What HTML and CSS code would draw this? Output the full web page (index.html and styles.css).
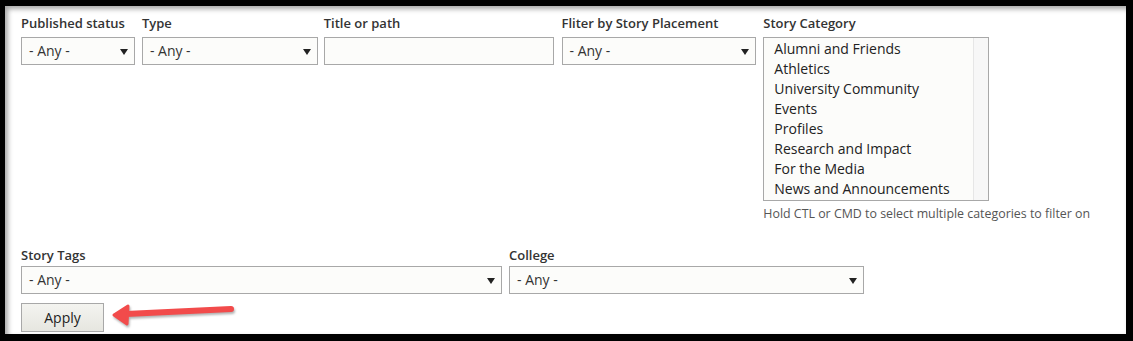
FILE: index.html
```html
<!DOCTYPE html>
<html lang="en">
<head>
  <meta charset="UTF-8" />
  <title>Stories filter</title>
  <link rel="stylesheet" href="styles.css">
</head>
<body>

<div class="frame">
  <div class="panel">
    <form class="filters">
      <div class="row">
        <div class="field w-status">
          <label>Published status</label>
          <div class="select">- Any -</div>
        </div>
        <div class="field w-type">
          <label>Type</label>
          <div class="select">- Any -</div>
        </div>
        <div class="field w-title">
          <label>Title or path</label>
          <div class="text-input"></div>
        </div>
        <div class="field w-placement">
          <label>Fliter by Story Placement</label>
          <div class="select">- Any -</div>
        </div>
        <div class="field w-category">
          <label>Story Category</label>
          <div class="listbox">
            <ul>
              <li>Alumni and Friends</li>
              <li>Athletics</li>
              <li>University Community</li>
              <li>Events</li>
              <li>Profiles</li>
              <li>Research and Impact</li>
              <li>For the Media</li>
              <li>News and Announcements</li>
            </ul>
            <div class="scroll-track"></div>
          </div>
          <p class="help">Hold CTL or CMD to select multiple categories to filter on</p>
        </div>
      </div>

      <div class="row row-two">
        <div class="field w-tags">
          <label>Story Tags</label>
          <div class="select">- Any -</div>
        </div>
        <div class="field w-college">
          <label>College</label>
          <div class="select">- Any -</div>
        </div>
      </div>

      <div class="actions">
        <button type="button">Apply</button>
        <svg class="arrow" width="126" height="28" viewBox="0 0 126 28">
          <g fill="#f24b4b" stroke="#f24b4b" stroke-linejoin="round" stroke-linecap="round">
            <line x1="121" y1="8" x2="16" y2="13" stroke-width="6"/>
            <polygon points="4,14 18,5 17,23" stroke-width="3"/>
          </g>
        </svg>
      </div>
    </form>
  </div>
</div>

</body>
</html>
```

FILE: styles.css
```css
body {
  margin: 0;
  background: #000;
  font-family: 'Open Sans', 'Liberation Sans', sans-serif;
  color: #222;
}

.frame {
  padding: 6px 7px 7px 5px;
  height: 328px;
}

.panel {
  background: #fff;
  height: 100%;
  box-sizing: border-box;
  padding: 8px 16px 0 16px;
  box-shadow: inset 3px 3px 5px rgba(0,0,0,0.35);
}

.row {
  display: flex;
  align-items: flex-start;
}

.field {
  margin-right: 7px;
}

.field label {
  display: block;
  font-size: 13px;
  font-weight: 600;
  color: #333;
  line-height: 18px;
  height: 23px;
}

.w-status { width: 114px; }
.w-type { width: 176px; margin-right: 6px; }
.w-title { width: 230px; margin-right: 8px; }
.w-placement { width: 195px; }
.w-category { width: 340px; }
.w-tags { width: 481px; }
.w-college { width: 355px; }

.select, .text-input {
  box-sizing: border-box;
  height: 28px;
  border: 1px solid #a8a8a8;
  background: #fcfcfa;
  font-size: 14px;
  line-height: 26px;
  padding-left: 7px;
  color: #333;
  position: relative;
}

.select::after {
  content: "";
  position: absolute;
  right: 6px;
  top: 11px;
  border-left: 4px solid transparent;
  border-right: 4px solid transparent;
  border-top: 6px solid #222;
}

.listbox {
  width: 226px;
  height: 164px;
  box-sizing: border-box;
  border: 1px solid #a8a8a8;
  background: #fcfcfa;
  display: flex;
}

.listbox ul {
  list-style: none;
  margin: 0;
  padding: 1px 0 0 10px;
  flex: 1;
}

.listbox li {
  font-size: 14px;
  line-height: 20px;
  color: #222;
}

.scroll-track {
  width: 14px;
  border-left: 1px solid #e6e6e6;
  background: #f7f7f7;
}

.help {
  margin: 4px 0 0 0;
  font-size: 12.4px;
  color: #555;
  white-space: nowrap;
}

.row-two {
  margin-top: 24px;
}

.row-two .field label {
  height: 20px;
}

.actions {
  display: flex;
  align-items: center;
  margin-top: 9px;
}

.actions button {
  width: 83px;
  height: 29px;
  border: 1px solid #a8a8a8;
  background: linear-gradient(#f4f4f0, #e6e6e0);
  font-family: 'Open Sans', 'Liberation Sans', sans-serif;
  font-size: 14px;
  color: #222;
  padding: 0;
}

.arrow {
  margin-left: 6px;
  margin-top: -6px;
  filter: drop-shadow(1px 2px 1px rgba(0,0,0,0.3));
}
```
